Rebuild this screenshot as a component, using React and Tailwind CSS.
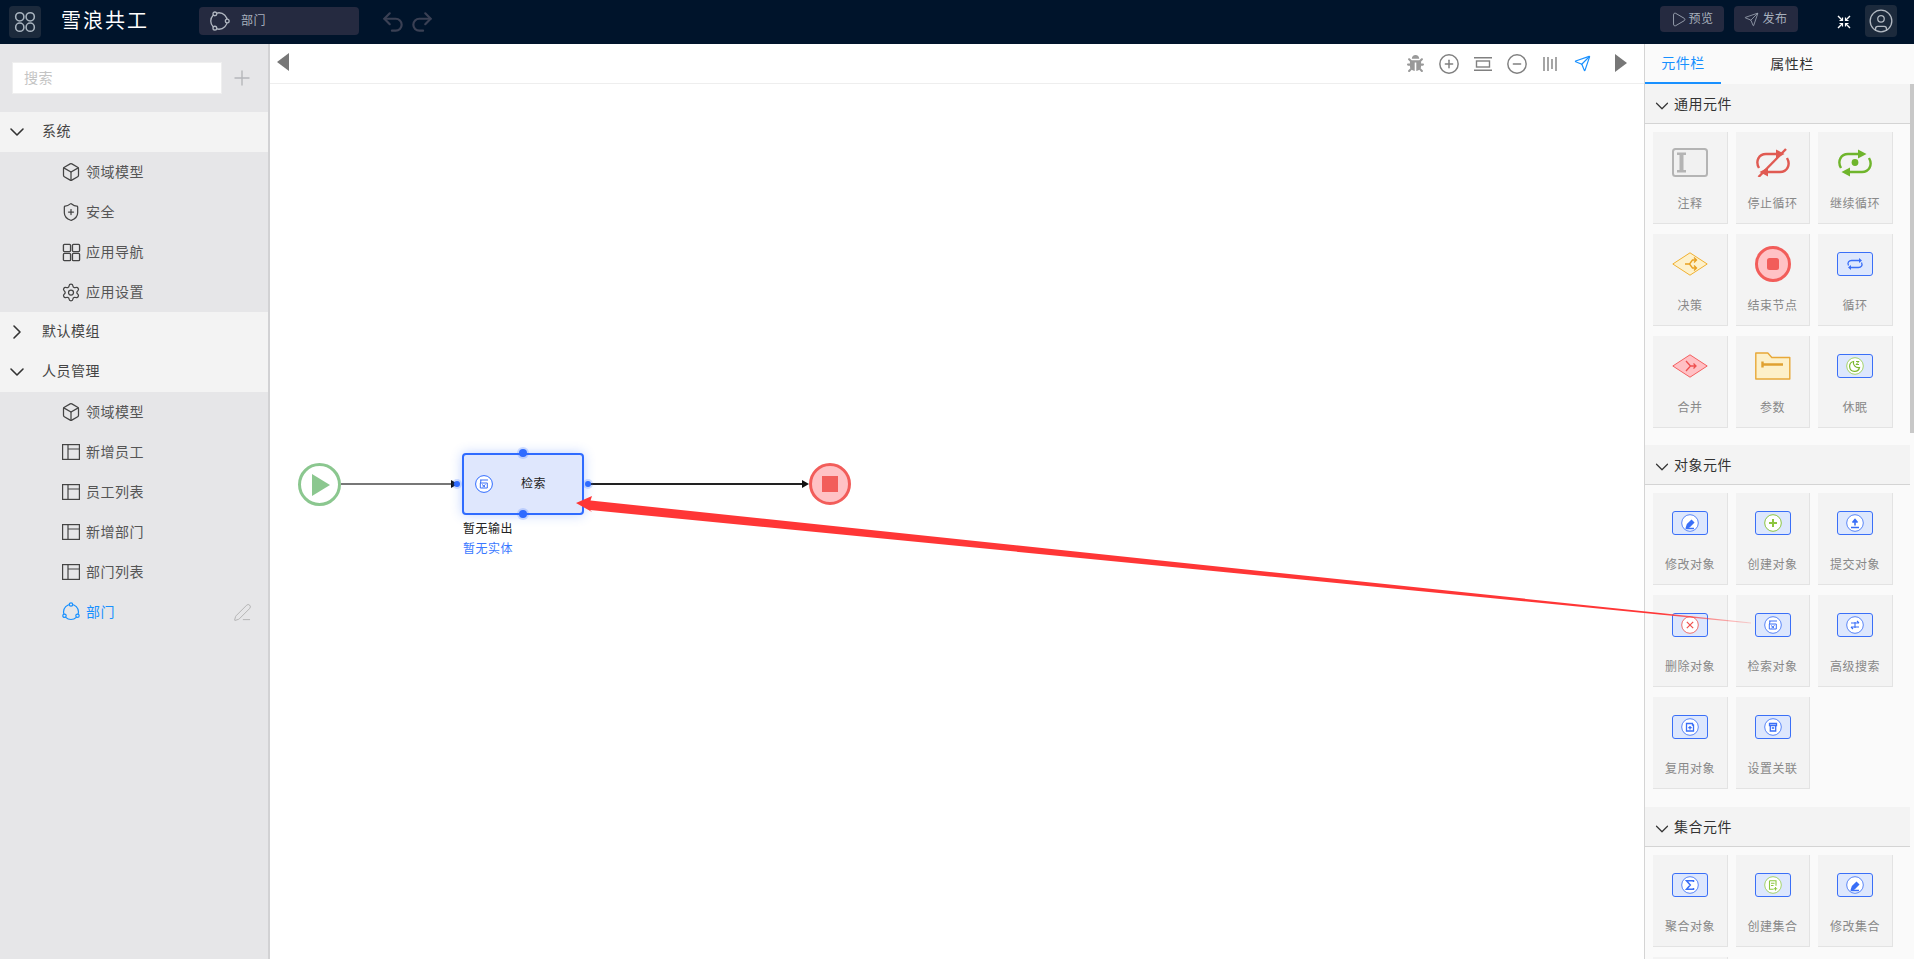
import React from 'react';
import {
  Box,
  ShieldPlus,
  Settings,
  ChevronDown,
  ChevronRight,
  Plus,
  Play,
  Send,
  CirclePlus,
  CircleMinus,
  Undo2,
  Redo2,
  CircleUser,
  PenLine,
} from 'lucide-react';
import { FaBug } from 'react-icons/fa';

// three-dot ring used for the flow pages
const FlowIcon = ({ color, bg, rotate = 0, size = 20 }) => (
  <svg width={size} height={size} viewBox="0 0 20 20" fill="none">
    <g transform={`rotate(${rotate} 10 10)`} stroke={color} strokeWidth="1.2">
      <circle cx="10" cy="10" r="7.5" />
      <circle cx="10" cy="2.5" r="1.7" fill={bg} />
      <circle cx="16.5" cy="13.75" r="1.7" fill={bg} />
      <circle cx="3.5" cy="13.75" r="1.7" fill={bg} />
    </g>
  </svg>
);

const GridIcon = ({ color, size = 20, r = 2 }) => (
  <svg width={size} height={size} viewBox="0 0 20 20" fill="none" stroke={color} strokeWidth="1.4">
    <rect x="1.5" y="1.5" width="7.5" height="7.5" rx={r} />
    <rect x="11" y="1.5" width="7.5" height="7.5" rx={r} />
    <rect x="1.5" y="11" width="7.5" height="7.5" rx={r} />
    <rect x="11" y="11" width="7.5" height="7.5" rx={r} />
  </svg>
);

const PageIcon = () => (
  <svg width="18" height="16" viewBox="0 0 18 16" fill="none" stroke="#444" strokeWidth="1.2">
    <rect x="0.6" y="0.6" width="16.8" height="14.8" />
    <path d="M6 0.6V15.4M6 5H17.4" />
  </svg>
);

// small glyphs that sit inside the round badge of the blue boxes
const glyphs = {
  edit: <path d="M14.5 16.5l1-3 4-4 2 2-4 4zM14 17.5h8" stroke="#3a6ff7" strokeWidth="1.5" fill="#3a6ff7" />,
  add: <path d="M18 8v8M14 12h8" stroke="#8cc63f" strokeWidth="2" />,
  submit: <path d="M18 14.5V9.5M15.5 11.5L18 8.5l2.5 3M14 16.5h8" stroke="#3a6ff7" strokeWidth="1.6" fill="#3a6ff7" />,
  remove: <path d="M14.8 8.8l6.4 6.4M21.2 8.8l-6.4 6.4" stroke="#f0504d" strokeWidth="1.2" />,
  search: <path d="M14 8h8M15 8l-.5 3M14.3 11h7v5h-7zM16 12.5l3 2.5M19.5 12.5l-3 2.5" stroke="#3a6ff7" strokeWidth="1" />,
  filter: <path d="M14 10h8M20 8l2 2M14 14h8M16 16l-2-2M18 9v6" stroke="#3a6ff7" strokeWidth="1.1" />,
  copy: <path d="M14.5 8.5h6v1.5h1v6h-7zM18 11v3.5M16.3 12.7h3.4" stroke="#3a6ff7" strokeWidth="1.3" />,
  link: <path d="M14.5 8.5h7v2h-7zM15.3 10.5v5.5h5.4v-5.5M16.8 13h2.4" stroke="#3a6ff7" strokeWidth="1.3" />,
  sigma: <path d="M21.5 9v-1.2h-7l3.8 4.2-3.8 4.2h7V15" stroke="#3a6ff7" strokeWidth="1.5" />,
  newList: <path d="M14.5 7.8h6.5v5M14.5 7.8v8.4h4M16 10.2h3.5M16 12.5h2.5M20.5 14v3.5M18.8 15.7h3.4" stroke="#8cc63f" strokeWidth="1.1" />,
};

const BlueBox = ({ glyph, ring = '#5a86f8' }) => (
  <svg width="36" height="24" viewBox="0 0 36 24" fill="none">
    <rect x="0.5" y="0.5" width="35" height="23" rx="2.5" fill="#dde7fd" stroke="#3a6ff7" />
    <circle cx="18" cy="12" r="8.3" fill="#fff" stroke={ring} />
    {glyphs[glyph]}
  </svg>
);

const LoopBox = () => (
  <svg width="36" height="24" viewBox="0 0 36 24" fill="none">
    <rect x="0.5" y="0.5" width="35" height="23" rx="2.5" fill="#dde7fd" stroke="#3a6ff7" />
    <path d="M11.5 13.5c-1.5-3 .5-5 3-5h8M24.5 10.5c1.5 3-.5 5-3 5h-8" stroke="#3a6ff7" strokeWidth="1.3" />
    <path d="M22 6l3 2.5-3 2.5zM14 13l-3 2.5 3 2.5z" fill="#3a6ff7" />
  </svg>
);

const SleepBox = () => (
  <svg width="36" height="24" viewBox="0 0 36 24" fill="none">
    <rect x="0.5" y="0.5" width="35" height="23" rx="2.5" fill="#dde7fd" stroke="#3a6ff7" />
    <circle cx="18" cy="12" r="8.3" fill="#fff" stroke="#a5d46a" />
    <path d="M16.5 7.5a5 5 0 1 0 6 6a5 5 0 0 1-6-6z" stroke="#7cb82f" strokeWidth="1.2" />
    <path d="M19 7.5h3l-3 3h3" stroke="#7cb82f" strokeWidth="1" />
  </svg>
);

const NoteIcon = () => (
  <svg width="36" height="29" viewBox="0 0 36 29" fill="none">
    <rect x="1" y="1" width="34" height="27" rx="2.5" fill="#f1f1f1" stroke="#b4b4b4" strokeWidth="2" />
    <path d="M5 4.5h9v2.5h-2.5v15H14v2.5H5V22h2.5V7H5z" fill="#b4b4b4" />
  </svg>
);

const CycleIcon = ({ color, slash, dot }) => (
  <svg width="36" height="29" viewBox="0 0 36 29" fill="none">
    <path d="M4 20C0 13 4 6 11 6H21M32 10C36 17 32 24 25 24H13" stroke={color} strokeWidth="2.4" />
    <path d="M21 1.5L29.5 6 21 10.5zM13 19.5L4.5 24 13 28.5z" fill={color} />
    {dot && <circle cx="18" cy="14.5" r="3.4" fill={color} />}
    {slash && <path d="M3.5 29L31 1" stroke={color} strokeWidth="2.4" />}
  </svg>
);

const Diamond = ({ fill, stroke, glyph, merge }) => (
  <svg width="36" height="24" viewBox="0 0 36 24" fill="none">
    <path d="M18 .8L35.2 12 18 23.2 .8 12z" fill={fill} stroke={stroke} />
    {merge ? (
      <path d="M14 7l4.5 5H24M14 17l4.5-5M21.5 9.5L24 12l-2.5 2.5" stroke={glyph} strokeWidth="1.3" />
    ) : (
      <path d="M13 12h4.5l3-4h3.5M17.5 12l3 4h3.5M22 5.5l2.5 2.5L22 10.5M22 13.5l2.5 2.5-2.5 2.5" stroke={glyph} strokeWidth="1.3" />
    )}
  </svg>
);

const StopIcon = () => (
  <svg width="36" height="36" viewBox="0 0 36 36" fill="none">
    <circle cx="18" cy="18" r="16.5" fill="#ffc2c5" stroke="#f25d5a" strokeWidth="3" />
    <rect x="12" y="12" width="12" height="12" rx="2.5" fill="#f25d5a" />
  </svg>
);

const FolderIcon = () => (
  <svg width="36" height="28" viewBox="0 0 36 28" fill="none">
    <path d="M.8 1h12l4 4.5h18V27H.8z" fill="#fdf0c9" stroke="#e8a838" strokeWidth="1.4" strokeLinejoin="round" />
    <path d="M7.5 9.5v6M7.5 12.5H28" stroke="#e0a030" strokeWidth="2.4" />
  </svg>
);

const sections = [
  {
    title: '通用元件',
    cards: [
      { label: '注释', icon: <NoteIcon /> },
      { label: '停止循环', icon: <CycleIcon color="#e05a52" slash /> },
      { label: '继续循环', icon: <CycleIcon color="#6fb52c" dot /> },
      { label: '决策', icon: <Diamond fill="#fdf1cc" stroke="#f0b030" glyph="#e8a020" /> },
      { label: '结束节点', icon: <StopIcon /> },
      { label: '循环', icon: <LoopBox /> },
      { label: '合并', icon: <Diamond fill="#ffc0c4" stroke="#f36060" glyph="#ee5050" merge /> },
      { label: '参数', icon: <FolderIcon /> },
      { label: '休眠', icon: <SleepBox /> },
    ],
  },
  {
    title: '对象元件',
    cards: [
      { label: '修改对象', icon: <BlueBox glyph="edit" /> },
      { label: '创建对象', icon: <BlueBox glyph="add" ring="#8cc63f" /> },
      { label: '提交对象', icon: <BlueBox glyph="submit" /> },
      { label: '删除对象', icon: <BlueBox glyph="remove" ring="#f0706d" /> },
      { label: '检索对象', icon: <BlueBox glyph="search" /> },
      { label: '高级搜索', icon: <BlueBox glyph="filter" /> },
      { label: '复用对象', icon: <BlueBox glyph="copy" /> },
      { label: '设置关联', icon: <BlueBox glyph="link" /> },
    ],
  },
  {
    title: '集合元件',
    cards: [
      { label: '聚合对象', icon: <BlueBox glyph="sigma" /> },
      { label: '创建集合', icon: <BlueBox glyph="newList" ring="#a5d46a" /> },
      { label: '修改集合', icon: <BlueBox glyph="edit" /> },
      { label: '' },
    ],
  },
];

const cubeIcon = <Box size={22} strokeWidth={1.5} color="#444" />;

const TreeGroup = ({ title, open, children }) => (
  <div>
    <div className="flex h-10 items-center bg-[#f3f3f3] text-[#444]">
      <div className="flex w-[34px] justify-center">
        {open ? <ChevronDown size={24} strokeWidth={1.6} color="#333" /> : <ChevronRight size={24} strokeWidth={1.6} color="#333" />}
      </div>
      <span className="ml-2 -mt-1">{title}</span>
    </div>
    {open && children}
  </div>
);

const TreeItem = ({ icon, label, active }) => (
  <div className={`flex h-10 items-center pl-[61px] ${active ? 'text-[#1890ff]' : 'text-[#555]'}`}>
    <div className="flex w-5 justify-center">{icon}</div>
    <span className="ml-[5px] -mt-[2px]">{label}</span>
    {active && <PenLine size={19} strokeWidth={1} color="#a8a8a8" className="ml-auto mr-[16px]" />}
  </div>
);

const Sidebar = () => (
  <aside className="w-[270px] shrink-0 border-r-2 border-[#d2d2d4] bg-[#e6e6e8] text-sm tracking-[0.5px]">
    <div className="flex h-[68px] items-center pl-3">
      <input
        placeholder="搜索"
        className="h-8 w-[210px] border border-[#efefef] bg-white px-[11px] pb-[2px] outline-none placeholder:text-[#c4c4c4]"
      />
      <Plus size={24} strokeWidth={1.4} color="#b5b7ba" className="ml-2" />
    </div>
    <TreeGroup title="系统" open>
      <TreeItem icon={cubeIcon} label="领域模型" />
      <TreeItem icon={<ShieldPlus size={22} strokeWidth={1.5} color="#444" />} label="安全" />
      <TreeItem icon={<GridIcon color="#444" size={19} r={1} />} label="应用导航" />
      <TreeItem icon={<Settings size={21} strokeWidth={1.5} color="#444" />} label="应用设置" />
    </TreeGroup>
    <TreeGroup title="默认模组" />
    <TreeGroup title="人员管理" open>
      <TreeItem icon={cubeIcon} label="领域模型" />
      <TreeItem icon={<PageIcon />} label="新增员工" />
      <TreeItem icon={<PageIcon />} label="员工列表" />
      <TreeItem icon={<PageIcon />} label="新增部门" />
      <TreeItem icon={<PageIcon />} label="部门列表" />
      <TreeItem icon={<FlowIcon color="#1890ff" bg="#e6e6e8" />} label="部门" active />
    </TreeGroup>
  </aside>
);

const Header = () => (
  <header className="flex h-11 shrink-0 items-center bg-[#00142b]">
    <div className="ml-[9px] flex h-8 w-8 items-center justify-center rounded bg-[#1c2a3c]">
      <GridIcon color="#a9b4bf" size={22} r={4} />
    </div>
    <div className="ml-5 pb-1 text-xl tracking-[2px] text-white">雪浪共工</div>
    <div className="ml-[50px] -mt-[2px] flex h-7 w-40 items-center rounded bg-[#252a40] pl-[9px] text-xs tracking-[0.5px] text-[#a8b0bd]">
      <FlowIcon color="#b0b6c0" bg="#252a40" rotate={90} size={22} />
      <span className="ml-[11px] -mt-[2px]">部门</span>
    </div>
    <div className="ml-[21px] flex items-center gap-[3px] text-[#3a4054]">
      <Undo2 size={26} strokeWidth={2} />
      <Redo2 size={26} strokeWidth={2} />
    </div>
    <div className="ml-auto -mt-[6px] flex items-center gap-[10px] text-xs tracking-[0.5px] text-[#a8b0bd]">
      <div className="flex h-[26px] w-16 items-center justify-center gap-[1px] rounded bg-[#252a40] pb-[2px]">
        <Play size={17} strokeWidth={1.2} className="mt-[2px]" />
        预览
      </div>
      <div className="flex h-[26px] w-16 items-center justify-center gap-[3px] rounded bg-[#252a40] pb-[2px]">
        <Send size={15} strokeWidth={1.2} className="mt-[2px]" />
        发布
      </div>
    </div>
    <svg width="14" height="14" viewBox="0 0 14 14" className="ml-[39px]" fill="none" stroke="#fff" strokeWidth="1.4">
      <path d="M1 1l4 4M13 1L9 5M1 13l4-4M13 13L9 9" />
      <path d="M5.5 2.5v3h-3M8.5 2.5v3h3M5.5 11.5v-3h-3M8.5 11.5v-3h3" strokeWidth="1.2" />
    </svg>
    <div className="ml-[14px] mr-[17px] -mt-[2px] flex h-8 w-8 items-center justify-center rounded bg-[#1c2a3c]">
      <CircleUser size={26} strokeWidth={1.2} color="#b3bac3" />
    </div>
  </header>
);

const Toolbar = () => (
  <div className="flex h-10 shrink-0 items-center border-b border-[#eeeeee] pl-[7px] pr-[17px]">
    <svg width="12" height="18" viewBox="0 0 12 18" className="-mt-1"><path d="M12 0v18L0 9z" fill="#777" /></svg>
    <div className="ml-auto flex items-center text-[#808080]">
      <div className="flex w-[34px] justify-center"><FaBug size={17} color="#999" /></div>
      <div className="flex w-[34px] justify-center"><CirclePlus size={22} strokeWidth={1.6} /></div>
      <div className="flex w-[34px] justify-center">
        <svg width="18" height="14" viewBox="0 0 18 14" fill="none" stroke="#808080" strokeWidth="1.4">
          <path d="M0 .8h18M0 13.2h18" />
          <rect x="2.5" y="4" width="13" height="6" />
        </svg>
      </div>
      <div className="flex w-[34px] justify-center"><CircleMinus size={22} strokeWidth={1.6} /></div>
      <div className="flex w-[32px] justify-center">
        <svg width="14" height="14" viewBox="0 0 14 14" stroke="#808080" strokeWidth="1.4">
          <path d="M1 0v14M5 0v14M9 2v10M13 0v14" />
        </svg>
      </div>
      <div className="flex w-[32px] justify-center"><Send size={17} strokeWidth={1.7} color="#1890ff" /></div>
      <svg width="12" height="18" viewBox="0 0 12 18" className="ml-[17px] -mt-[2px]"><path d="M0 0v18l12-9z" fill="#777" /></svg>
    </div>
  </div>
);

// free canvas: node positions are the content here
const Canvas = () => (
  <div className="relative flex-1 bg-white text-xs tracking-[0.5px]">
    <svg className="absolute inset-0" width="1374" height="875" fill="none">
      <path d="M71 400H184" stroke="#777" strokeWidth="1.8" />
      <path d="M181 396l7 4-7 4z" fill="#111" />
      <path d="M318 400H533" stroke="#222" strokeWidth="1.8" />
      <path d="M532 396l7 4-7 4z" fill="#111" />
    </svg>

    <div className="absolute left-[28px] top-[379px] flex h-[43px] w-[43px] items-center justify-center rounded-full border-[3px] border-[#8bc78f] bg-white">
      <svg width="18" height="22" viewBox="0 0 18 22" className="ml-[3px]"><path d="M0 0l18 11L0 22z" fill="#8bc78f" /></svg>
    </div>

    <div className="absolute left-[192px] top-[369px] flex h-[62px] w-[122px] items-center rounded-[4px] border-2 border-[#2f6bff] bg-[#dfe7fd] pl-[11px] shadow-[0_0_12px_rgba(47,107,255,0.3)]">
      <svg width="18" height="18" viewBox="9 3 18 18" fill="none">
        <circle cx="18" cy="12" r="8.4" fill="#fff" stroke="#2f6bff" />
        {glyphs.search}
      </svg>
      <span className="ml-7 -mt-[2px] text-[#222]">检索</span>
    </div>
    <span className="absolute left-[249px] top-[365px] h-[8px] w-[8px] rounded-full bg-[#2f6bff] ring-2 ring-[#2f6bff]/20" />
    <span className="absolute left-[249px] top-[426px] h-[8px] w-[8px] rounded-full bg-[#2f6bff] ring-2 ring-[#2f6bff]/20" />
    <span className="absolute left-[184px] top-[397px] h-[6px] w-[6px] rounded-full bg-[#2f6bff] ring-2 ring-[#2f6bff]/20" />
    <span className="absolute left-[315px] top-[397px] h-[6px] w-[6px] rounded-full bg-[#2f6bff] ring-2 ring-[#2f6bff]/20" />

    <div className="absolute left-[193px] top-[436px] text-[#222]">暂无输出</div>
    <div className="absolute left-[193px] top-[456px] text-[#3a78ff]">暂无实体</div>

    <div className="absolute left-[539px] top-[379px] flex h-[42px] w-[42px] items-center justify-center rounded-full border-[3px] border-[#f25d5a] bg-[#ffc2c5]">
      <div className="h-4 w-4 bg-[#f25d5a]" />
    </div>
  </div>
);

const Card = ({ label, icon }) => (
  <div className="flex h-[92px] flex-col items-center border-b border-r border-[#e3e3e3] bg-[#f3f3f3]">
    <div className="flex h-[60px] w-full items-center justify-center">{icon}</div>
    <div className="mt-[3px] text-xs tracking-[0.5px] text-[#888]">{label}</div>
  </div>
);

const PaletteSection = ({ title, cards }) => (
  <div className="pb-[18px] first:pb-[17px]">
    <div className="flex h-10 items-center border-b border-[#d4d4d4] bg-[#f3f3f3] pl-[6px] text-sm tracking-[0.5px] text-[#333]">
      <ChevronDown size={22} strokeWidth={1.3} className="mt-[5px]" />
      <span className="ml-px -mt-[2px]">{title}</span>
    </div>
    <div className="grid grid-cols-[75px_74px_75px] gap-x-2 gap-y-[10px] pl-2 pt-2">
      {cards.map((card, i) => (
        <Card key={i} label={card.label} icon={card.icon} />
      ))}
    </div>
  </div>
);

const Palette = () => (
  <aside className="flex w-[270px] shrink-0 flex-col border-l border-[#d4d4d4] bg-[#fafafa]">
    <div className="flex h-10 shrink-0 text-sm tracking-[0.5px]">
      <div className="flex w-[76px] items-center justify-center border-b-2 border-[#1890ff] pb-[2px] text-[#1890ff]">元件栏</div>
      <div className="ml-[33px] flex w-[76px] items-center justify-center pb-[3px] text-[#333]">属性栏</div>
    </div>
    <div className="flex min-h-0 flex-1">
      <div className="min-w-0 flex-1 overflow-hidden">
        {sections.map((section) => (
          <PaletteSection key={section.title} title={section.title} cards={section.cards} />
        ))}
      </div>
      <div className="w-1 shrink-0">
        <div className="h-[349px] bg-[#c8c8c8]" />
      </div>
    </div>
  </aside>
);

const App = () => (
  <div className="relative flex h-screen w-full flex-col overflow-hidden bg-white [font-family:'Noto_Sans_CJK_SC',sans-serif]">
    <Header />
    <div className="flex min-h-0 flex-1">
      <Sidebar />
      <main className="flex min-w-0 flex-1 flex-col">
        <Toolbar />
        <Canvas />
      </main>
      <Palette />
    </div>

    {/* red drag arrow drawn over canvas and palette */}
    <svg className="pointer-events-none absolute inset-0" width="1914" height="959" fill="none">
      <defs>
        <linearGradient id="dragFade" gradientUnits="userSpaceOnUse" x1="1660" y1="0" x2="1751" y2="0">
          <stop offset="0" stopColor="#ff3636" />
          <stop offset="0.5" stopColor="#ff3636" stopOpacity="0.6" />
          <stop offset="1" stopColor="#ff3636" stopOpacity="0.2" />
        </linearGradient>
      </defs>
      <path d="M576 503L592 496L590.5 500.5L1751 622.5L1751 623.5L590 510L592 512z" fill="url(#dragFade)" />
    </svg>
  </div>
);

export default App;
